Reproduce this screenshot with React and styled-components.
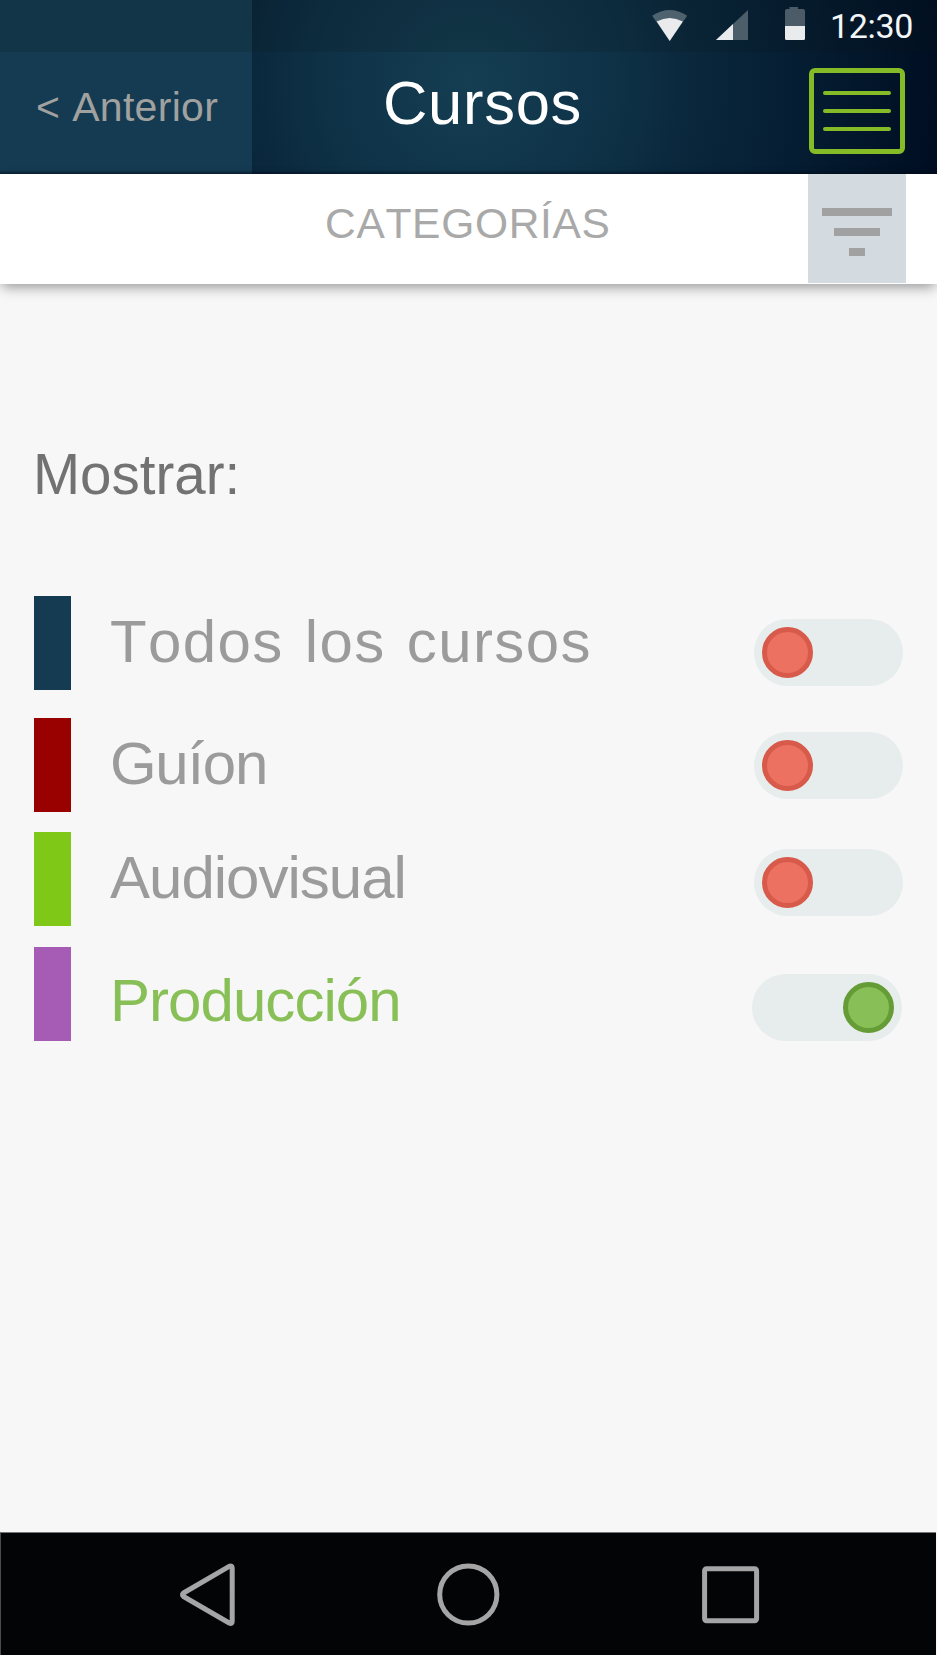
import React from "react";
import styled, { createGlobalStyle } from "styled-components";

const GlobalStyle = createGlobalStyle`
  * { box-sizing: border-box; }
  body {
    margin: 0;
    background: #f7f7f7;
    font-family: "Liberation Sans", Arial, sans-serif;
    font-kerning: none;
  }
`;

const Screen = styled.div`
  width: 937px;
  height: 1655px;
  display: flex;
  flex-direction: column;
  overflow: hidden;
  background: #f7f7f7;
`;

const Header = styled.header`
  position: relative;
  flex: none;
  height: 174px;
  display: flex;
  align-items: flex-start;
  background: radial-gradient(
    circle at 470px 82px,
    #153e53 0,
    #0e3146 150px,
    #0a273c 225px,
    #051d32 330px,
    #000e22 470px
  );
  &::after {
    content: "";
    position: absolute;
    left: 0;
    right: 0;
    bottom: 0;
    height: 4px;
    background: linear-gradient(rgba(0, 10, 25, 0), rgba(0, 10, 25, 0.55));
  }
`;

const StatusBar = styled.div`
  position: absolute;
  inset: 0 0 auto 0;
  height: 52px;
  padding-right: 24px;
  display: flex;
  justify-content: flex-end;
  align-items: flex-start;
  background: rgba(10, 25, 25, 0.17);
`;

const StatusIcon = styled.svg`
  display: block;
  flex: none;
  margin-right: ${(p) => p.$gap}px;
`;

const Clock = styled.span`
  font: 400 34px/52px Roboto, sans-serif;
  letter-spacing: -0.35px;
  color: #f3f5f6;
  width: 83px;
  white-space: nowrap;
`;

const BackButton = styled.button`
  width: 252px;
  height: 174px;
  border: 0;
  padding: 40px 0 0 36px;
  text-align: left;
  background: #143b51;
  color: #a1a1a0;
  font: 400 41px/1 "Liberation Sans", Arial, sans-serif;
  letter-spacing: 0.3px;
  word-spacing: 2.5px;
  white-space: nowrap;
`;

const Title = styled.h1`
  margin: 72px 0 0 131px;
  width: 426px;
  font-size: 61.5px;
  line-height: 62px;
  font-weight: 400;
  letter-spacing: 0.7px;
  color: #fff;
`;

const MenuButton = styled.button`
  width: 96px;
  height: 86px;
  margin-top: 68px;
  padding: 0;
  display: flex;
  flex-direction: column;
  align-items: center;
  justify-content: center;
  gap: 14px;
  border: 5px solid #84bb26;
  border-radius: 6px;
  background: transparent;
`;

const MenuLine = styled.span`
  width: 68px;
  height: 4px;
  border-radius: 2px;
  background: #84bb26;
`;

const SubHeader = styled.section`
  position: relative;
  flex: none;
  height: 110px;
  display: flex;
  background: #fff;
  box-shadow: 0 5px 12px -2px rgba(0, 0, 0, 0.4);
`;

const SubTitle = styled.h2`
  margin: 29px 0 0 325px;
  width: 483px;
  font-size: 42.5px;
  line-height: 42px;
  font-weight: 400;
  letter-spacing: 0.7px;
  color: #a9a9a9;
`;

const FilterButton = styled.button`
  width: 98px;
  height: 109px;
  border: 0;
  padding: 34px 0 0;
  display: flex;
  flex-direction: column;
  align-items: center;
  gap: 12px;
  background: #d3dbe0;
`;

const FilterBar = styled.span`
  width: ${(p) => p.$w}px;
  height: 8px;
  background: #a0a1a0;
`;

const Main = styled.main`
  flex: 1;
  padding: 161px 34px 0;
`;

const Prompt = styled.h3`
  margin: 0 0 0 -1px;
  height: 151px;
  font-size: 56.5px;
  line-height: 60px;
  font-weight: 400;
  letter-spacing: 0;
  color: #727272;
`;

const Row = styled.div`
  display: flex;
  align-items: flex-start;
  height: ${(p) => p.$pitch}px;
`;

const Swatch = styled.span`
  flex: none;
  width: 37px;
  height: ${(p) => p.$h}px;
  background: ${(p) => p.$color};
`;

const Label = styled.span`
  flex: 1;
  margin-left: 39px;
  padding-top: ${(p) => p.$top}px;
  font-size: 60px;
  line-height: 60px;
  letter-spacing: ${(p) => p.$spacing}px;
  word-spacing: 3px;
  white-space: nowrap;
  color: ${(p) => (p.$on ? "#88c057" : "#9b9b9b")};
`;

const Toggle = styled.button`
  flex: none;
  display: flex;
  justify-content: ${(p) => (p.$on ? "flex-end" : "flex-start")};
  width: ${(p) => (p.$on ? 150 : 149)}px;
  height: 67px;
  margin-top: ${(p) => p.$top}px;
  margin-right: ${(p) => (p.$on ? 1 : 0)}px;
  padding: 8px;
  border: 0;
  border-radius: 34px;
  background: #e7edec;
`;

const Knob = styled.span`
  width: 51px;
  height: 51px;
  border-radius: 50%;
  border: 5px solid ${(p) => (p.$on ? "#659c35" : "#d75a4a")};
  background: ${(p) => (p.$on ? "#88c057" : "#ed7161")};
`;

const NavBar = styled.nav`
  flex: none;
  height: 123px;
  margin: 0 1px 0 0;
  padding: 30px 0 0 178px;
  display: flex;
  align-items: flex-start;
  background: #030406;
  border-top: 1px solid #77777a;
  border-left: 1px solid #4b4c4e;
`;

const NavIcon = styled.svg`
  display: block;
  flex: none;
  margin-right: ${(p) => p.$gap}px;
  fill: none;
  stroke: #a5a5a5;
  stroke-width: 5;
  stroke-linejoin: round;
`;

const courses = [
  { name: "Todos los cursos", color: "#143b51", pitch: 122, h: 94, top: 16, spacing: 1.4, toggle: 23 },
  { name: "Guíon", color: "#990000", pitch: 114, h: 94, top: 16, spacing: -1.3, toggle: 14 },
  { name: "Audiovisual", color: "#7fc818", pitch: 115, h: 94, top: 16, spacing: -1, toggle: 17 },
  { name: "Producción", color: "#a65bb4", pitch: 94, h: 94, top: 24, spacing: -0.95, toggle: 27, on: true },
];

export default function App() {
  return (
    <Screen>
      <GlobalStyle />
      <Header>
        <BackButton>&lt; Anterior</BackButton>
        <Title>Cursos</Title>
        <MenuButton aria-label="Menú">
          <MenuLine />
          <MenuLine />
          <MenuLine />
        </MenuButton>
        <StatusBar>
          <StatusIcon $gap={28} width="36" height="52" viewBox="652 0 36 52">
            <path d="M652.2 15.7Q669.7 4.5 687.2 15.7L669.7 41Z" fill="#fff" fillOpacity=".28" />
            <path d="M656.7 21.5Q669.7 14.5 682.8 21.5L669.7 41Z" fill="#e9ebed" />
          </StatusIcon>
          <StatusIcon $gap={37} width="32" height="52" viewBox="716 0 32 52">
            <path d="M716 40L748 10V40Z" fill="#fff" fillOpacity=".28" />
            <path d="M716 40L733 24V40Z" fill="#e9ebed" />
          </StatusIcon>
          <StatusIcon $gap={25} width="20" height="52" viewBox="785 0 20 52">
            <path d="M789.5 7H798V9H803Q805 9 805 11V26H785V11Q785 9 787 9H789.5Z" fill="#fff" fillOpacity=".28" />
            <path d="M785 26H805V38.5Q805 40 803.5 40H786.5Q785 40 785 38.5Z" fill="#e9ebed" />
          </StatusIcon>
          <Clock>12:30</Clock>
        </StatusBar>
      </Header>
      <SubHeader>
        <SubTitle>CATEGORÍAS</SubTitle>
        <FilterButton aria-label="Filtrar">
          <FilterBar $w={70} />
          <FilterBar $w={46} />
          <FilterBar $w={16} />
        </FilterButton>
      </SubHeader>
      <Main>
        <Prompt>Mostrar:</Prompt>
        {courses.map((c) => (
          <Row key={c.name} $pitch={c.pitch}>
            <Swatch $color={c.color} $h={c.h} />
            <Label $top={c.top} $spacing={c.spacing} $on={c.on}>
              {c.name}
            </Label>
            <Toggle $top={c.toggle} $on={c.on} aria-pressed={!!c.on} aria-label={c.name}>
              <Knob $on={c.on} />
            </Toggle>
          </Row>
        ))}
      </Main>
      <NavBar>
        <NavIcon $gap={202} width="56" height="64" viewBox="179 1563 56 64">
          <path d="M229.2 1566.3Q232.2 1565 232.2 1568V1621.5Q232.2 1624.5 229.2 1623L183.5 1596.5Q181.5 1594.7 183.5 1593Z" />
        </NavIcon>
        <NavIcon $gap={201} width="64" height="64" viewBox="437 1563 64 64">
          <circle cx="468.3" cy="1594.5" r="28.6" />
        </NavIcon>
        <NavIcon $gap={0} width="58" height="64" viewBox="702 1563 58 64">
          <rect x="704.6" y="1568.7" width="52" height="52" rx="2" />
        </NavIcon>
      </NavBar>
    </Screen>
  );
}
